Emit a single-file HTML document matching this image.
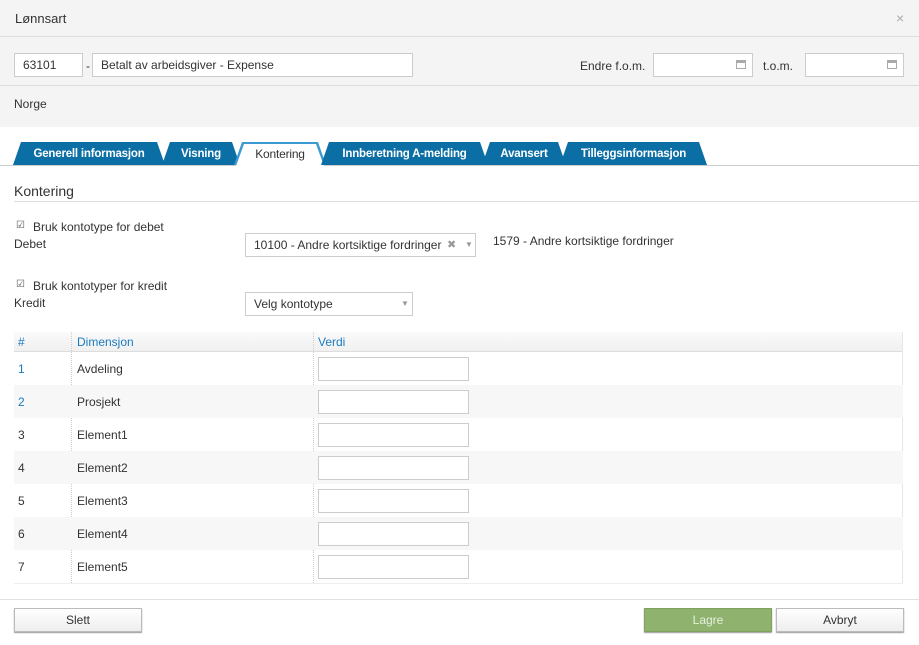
<!DOCTYPE html>
<html><head><meta charset="utf-8"><style>
*{box-sizing:border-box;margin:0;padding:0}
body{width:919px;height:645px;position:relative;background:#fff;font-family:"Liberation Sans",sans-serif;font-size:12px;color:#333;overflow:hidden}
.a{position:absolute}
.inp{position:absolute;background:#fff;border:1px solid #ccc;height:24px;padding:0 8px;line-height:22px;font-size:12px;color:#333}
.tab{position:absolute;top:142px;height:23px;background:#0b6fa6;color:#fff;font-weight:bold;font-size:11.5px;text-align:center;line-height:25px;letter-spacing:-0.2px}
.row{position:absolute;left:14px;width:889px;height:33px}
.cell{position:absolute;line-height:34px}
.vbox{position:absolute;left:318px;width:151px;height:24px;border:1px solid #ccc;background:#fff}
.btn{position:absolute;top:608px;height:24px;border:1px solid #bbb;background:linear-gradient(#fff,#eee);text-align:center;line-height:22px;box-shadow:0 1px 1px #999}
.cal{position:absolute;width:10px;height:9px;border:1px solid #aaa;border-top-width:3px}
</style></head><body>
<div class="a" style="left:0;top:0;width:919px;height:127px;background:#f4f4f4"></div>
<div class="a" style="left:0;top:36px;width:919px;height:1px;background:#ddd"></div>
<div class="a" style="left:0;top:85px;width:919px;height:1px;background:#ddd"></div>
<div class="a" style="left:15px;top:11px;font-size:13px;color:#333">Lønnsart</div>
<div class="a" style="left:896px;top:10px;font-size:14px;color:#aaa">×</div>
<div class="inp" style="left:14px;top:53px;width:69px">63101</div>
<div class="a" style="left:86px;top:59px">-</div>
<div class="inp" style="left:92px;top:53px;width:321px">Betalt av arbeidsgiver - Expense</div>
<div class="a" style="left:580px;top:59px">Endre f.o.m.</div>
<div class="inp" style="left:653px;top:53px;width:100px"></div>
<div class="cal" style="left:736px;top:60px"></div>
<div class="a" style="left:763px;top:59px">t.o.m.</div>
<div class="inp" style="left:805px;top:53px;width:99px"></div>
<div class="cal" style="left:887px;top:60px"></div>
<div class="a" style="left:14px;top:97px">Norge</div>

<div class="a" style="left:0;top:165px;width:919px;height:1px;background:#ccc"></div>
<div class="tab" style="left:13px;width:152px;clip-path:polygon(8px 0,calc(100% - 8px) 0,100% 100%,0 100%)">Generell informasjon</div>
<div class="tab" style="left:162px;width:78px;clip-path:polygon(8px 0,calc(100% - 8px) 0,100% 100%,0 100%)">Visning</div>
<div class="tab" style="left:234px;width:92px;background:#3d9ad1;clip-path:polygon(8px 0,calc(100% - 8px) 0,100% 100%,0 100%)"></div>
<div class="tab" style="left:236px;top:144px;height:22px;width:88px;background:#fff;color:#333;font-weight:normal;font-size:12px;line-height:21px;clip-path:polygon(8px 0,calc(100% - 8px) 0,100% 100%,0 100%)">Kontering</div>
<div class="tab" style="left:321px;width:167px;clip-path:polygon(8px 0,calc(100% - 8px) 0,100% 100%,0 100%)">Innberetning A-melding</div>
<div class="tab" style="left:482px;width:84px;clip-path:polygon(8px 0,calc(100% - 8px) 0,100% 100%,0 100%)">Avansert</div>
<div class="tab" style="left:560px;width:147px;clip-path:polygon(8px 0,calc(100% - 8px) 0,100% 100%,0 100%)">Tilleggsinformasjon</div>

<div class="a" style="left:14px;top:183px;font-size:14px">Kontering</div>
<div class="a" style="left:14px;top:201px;width:905px;height:1px;background:#ddd"></div>
<div class="a" style="left:16px;top:220px;font-size:10px;color:#555">☑</div>
<div class="a" style="left:33px;top:220px">Bruk kontotype for debet</div>
<div class="a" style="left:14px;top:237px">Debet</div>
<div class="inp" style="left:245px;top:233px;width:231px">10100 - Andre kortsiktige fordringer<span style="position:absolute;left:201px;color:#999;font-size:11px">✖</span><span style="position:absolute;left:219px;color:#999;font-size:8px">▼</span></div>
<div class="a" style="left:493px;top:234px">1579 - Andre kortsiktige fordringer</div>
<div class="a" style="left:16px;top:279px;font-size:10px;color:#555">☑</div>
<div class="a" style="left:33px;top:279px">Bruk kontotyper for kredit</div>
<div class="a" style="left:14px;top:296px">Kredit</div>
<div class="inp" style="left:245px;top:292px;width:168px">Velg kontotype<span style="position:absolute;left:155px;color:#999;font-size:8px">▼</span></div>

<div class="a" style="left:14px;top:332px;width:889px;height:20px;background:linear-gradient(#fafafa,#f0f0f0);border-bottom:1px solid #ddd;color:#1a7bc0">
<span class="a" style="left:4px;top:3px">#</span><span class="a" style="left:63px;top:3px">Dimensjon</span><span class="a" style="left:304px;top:3px">Verdi</span></div>
<div class="a" style="left:71px;top:332px;width:1px;height:251px;border-left:1px dotted #ccc"></div>
<div class="a" style="left:313px;top:332px;width:1px;height:251px;border-left:1px dotted #ccc"></div>
<div class="a" style="left:902px;top:332px;width:1px;height:251px;background:#e6e6e6"></div>

<div class="row" style="top:352px"><span class="cell" style="left:4px;color:#1a7bc0">1</span><span class="cell" style="left:63px">Avdeling</span></div>
<div class="row" style="top:385px;background:#f7f7f7"><span class="cell" style="left:4px;color:#1a7bc0">2</span><span class="cell" style="left:63px">Prosjekt</span></div>
<div class="row" style="top:418px"><span class="cell" style="left:4px">3</span><span class="cell" style="left:63px">Element1</span></div>
<div class="row" style="top:451px;background:#f7f7f7"><span class="cell" style="left:4px">4</span><span class="cell" style="left:63px">Element2</span></div>
<div class="row" style="top:484px"><span class="cell" style="left:4px">5</span><span class="cell" style="left:63px">Element3</span></div>
<div class="row" style="top:517px;background:#f7f7f7"><span class="cell" style="left:4px">6</span><span class="cell" style="left:63px">Element4</span></div>
<div class="row" style="top:550px"><span class="cell" style="left:4px">7</span><span class="cell" style="left:63px">Element5</span></div>
<div class="a" style="left:14px;top:583px;width:889px;height:1px;background:#eee"></div>
<div class="vbox" style="top:357px"></div><div class="vbox" style="top:390px"></div><div class="vbox" style="top:423px"></div><div class="vbox" style="top:456px"></div><div class="vbox" style="top:489px"></div><div class="vbox" style="top:522px"></div><div class="vbox" style="top:555px"></div>

<div class="a" style="left:0;top:599px;width:919px;height:1px;background:#e2e2e2"></div>
<div class="btn" style="left:14px;width:128px">Slett</div>
<div class="btn" style="left:644px;width:128px;background:#8fb26f;border-color:#7fa060;color:#e6f0dc">Lagre</div>
<div class="btn" style="left:776px;width:128px">Avbryt</div>
</body></html>
